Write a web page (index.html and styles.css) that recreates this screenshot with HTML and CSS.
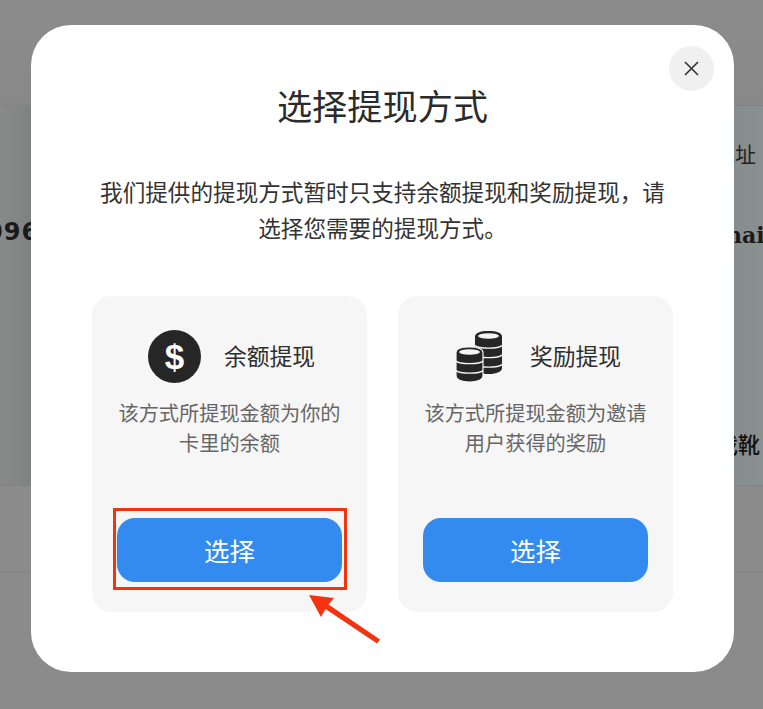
FILE: index.html
```html
<!DOCTYPE html>
<html lang="zh-CN">
<head>
<meta charset="utf-8">
<title>选择提现方式</title>
<link rel="stylesheet" href="styles.css">
</head>
<body>
<div class="page">
  <div class="page-top"></div>
  <section class="page-table">
    <div class="table-col table-left"><span class="num">096</span></div>
    <div class="table-col table-right">
      <span class="head-cell">地址</span>
      <span class="value-cell">hai</span>
      <span class="shoe-cell">戏靴</span>
    </div>
  </section>
  <div class="page-row"></div>
  <div class="page-rest"></div>
</div>

<div class="overlay">
  <div class="modal">
    <button class="close" aria-label="关闭">
      <svg width="15" height="15" viewBox="0 0 15 15"><path d="M1 1L14 14M14 1L1 14" fill="none" stroke="#333" stroke-width="1.6"/></svg>
    </button>
    <h1 class="title">选择提现方式</h1>
    <p class="intro">我们提供的提现方式暂时只支持余额提现和奖励提现，请选择您需要的提现方式。</p>
    <div class="cards">
      <div class="card">
        <div class="card-head">
          <div class="icon-box"><span class="dollar">$</span></div>
          <span class="card-title">余额提现</span>
        </div>
        <p class="card-desc">该方式所提现金额为你的<br>卡里的余额</p>
        <button class="pick">选择</button>
        <span class="mark-box"></span>
        <svg class="mark-arrow" width="80" height="56" viewBox="0 0 80 56"><path d="M0 0L25 3L19.500 9.500L71 44.500L68 48.500L16.500 14L12 22Z" fill="#f5340f"/></svg>
      </div>
      <div class="card">
        <div class="card-head">
          <div class="icon-box">
            <svg class="coins" width="46" height="51" viewBox="0 0 46 51">
              <path d="M19 5.500C19 2 24 0 32.500 0S46 2 46 5.500V37C46 40.500 41 43 32.500 43S19 40.500 19 37Z" fill="#262626"/>
              <ellipse cx="32.500" cy="5" rx="10.500" ry="2.800" fill="#f5f5f5"/>
              <g fill="none" stroke="#f5f5f5" stroke-width="1.300">
                <path d="M19 14.500C22 18 43 18 46 14.500"/>
                <path d="M19 24C22 27.500 43 27.500 46 24"/>
                <path d="M19 33.500C22 37 43 37 46 33.500"/>
              </g>
              <path d="M0 21.500C0 18 5 16 13.500 16S27 18 27 21.500V45C27 48.500 22 51 13.500 51S0 48.500 0 45Z" fill="#262626" stroke="#f5f5f5" stroke-width="1.200"/>
              <ellipse cx="13.500" cy="21" rx="10.500" ry="2.800" fill="#f5f5f5"/>
              <g fill="none" stroke="#f5f5f5" stroke-width="1.300">
                <path d="M0 30C3 33.500 24 33.500 27 30"/>
                <path d="M0 39.500C3 43 24 43 27 39.500"/>
              </g>
            </svg>
          </div>
          <span class="card-title">奖励提现</span>
        </div>
        <p class="card-desc">该方式所提现金额为邀请<br>用户获得的奖励</p>
        <button class="pick">选择</button>
      </div>
    </div>
  </div>
</div>
</body>
</html>
```
FILE: styles.css
```css
* { box-sizing: border-box; }
html, body { margin: 0; height: 100%; }
body {
  width: 763px;
  height: 709px;
  overflow: hidden;
  position: relative;
  background: #8a8a8a;
  font-family: "Noto Sans CJK SC", "Noto Sans", sans-serif;
}
.page { display: flex; flex-direction: column; height: 709px; }
.page-top { height: 106px; background: linear-gradient(#8c8c8c, #888888); border-bottom: 1px solid #818181; }
.page-table {
  height: 380px;
  display: flex;
  justify-content: space-between;
  background: linear-gradient(90deg, #8a8a8a 0%, #808282 4%, #868c8c 94%, #889090 100%);
  border-bottom: 1px solid #818181;
}
.table-col { position: relative; width: 31px; overflow: hidden; display: flex; flex-direction: column; }
.table-left { padding-top: 110px; }
.num {
  font: bold 24px/32px "DejaVu Sans", sans-serif;
  color: #1a1a1a;
  margin-left: -14px;
  letter-spacing: 1px;
  white-space: nowrap;
}
.table-right { width: 29px; padding-top: 32px; }
.head-cell { font-size: 21px; line-height: 30px; color: #222; margin-left: -20px; white-space: nowrap; }
.value-cell { font: bold 22px/30px "DejaVu Serif", serif; color: #1a1a1a; margin-top: 52px; white-space: nowrap; margin-left: -8px; }
.shoe-cell { font: 22px/30px "Noto Sans CJK SC", serif; font-weight: 500; color: #111; margin-top: 178px; margin-left: -18px; white-space: nowrap; }
.page-row { height: 86px; border-bottom: 1px solid #828282; background: #8b8b8b; }
.page-rest { flex: 1; background: #8b8b8b; }

.overlay {
  position: fixed;
  inset: 0;
  padding: 25px 0 0 31px;
}
.modal {
  position: relative;
  width: 703px;
  height: 647px;
  background: #fff;
  border-radius: 40px;
  padding: 55px 61px 60px;
  display: flex;
  flex-direction: column;
}
.close {
  position: absolute;
  top: 21px;
  right: 20px;
  width: 45px;
  height: 45px;
  border: 0;
  padding: 0;
  border-radius: 50%;
  background: #f0f0f0;
  display: flex;
  align-items: center;
  justify-content: center;
}
.title {
  margin: 0;
  font-size: 35.2px;
  line-height: 50px;
  font-weight: 400;
  color: #2b2b2b;
  text-align: center;
}
.intro {
  margin: 44px 0 0;
  font-size: 22.6px;
  line-height: 36px;
  color: #333;
  text-align: center;
}
.cards { display: flex; gap: 31px; margin-top: 50px; }
.card {
  position: relative;
  width: 275px;
  height: 316px;
  background: #f6f6f6;
  border-radius: 20px;
  padding: 34px 25px 30px;
  display: flex;
  flex-direction: column;
}
.card-head { display: flex; align-items: center; justify-content: center; gap: 23px; padding-left: 4px; margin: 0 -25px; }
.icon-box { width: 53px; height: 53px; display: flex; align-items: center; justify-content: center; flex: none; }
.coins { margin-left: -1px; margin-right: 1px; }
.dollar {
  width: 53px;
  height: 53px;
  border-radius: 50%;
  background: #262626;
  color: #fff;
  font: bold 35px/53px "Liberation Sans", sans-serif;
  text-align: center;
}
.card-title { font-size: 22.8px; line-height: 34px; color: #2e2e2e; padding-bottom: 2px; }
.card-desc {
  margin: 15px 0 0;
  font-size: 20.2px;
  line-height: 30px;
  color: #666;
  text-align: center;
  white-space: nowrap;
}
.pick {
  margin-top: auto;
  height: 64px;
  width: 225px;
  border: 0;
  border-radius: 18px;
  background: #338aef;
  color: #fff;
  font-family: inherit;
  font-size: 25.5px;
  padding: 0 0 2px;
}
.mark-box {
  position: absolute;
  left: 21px;
  top: 212px;
  width: 234px;
  height: 82px;
  border: 3px solid #f0350f;
}
.mark-arrow { position: absolute; left: 217px; top: 299px; overflow: visible; }
```
